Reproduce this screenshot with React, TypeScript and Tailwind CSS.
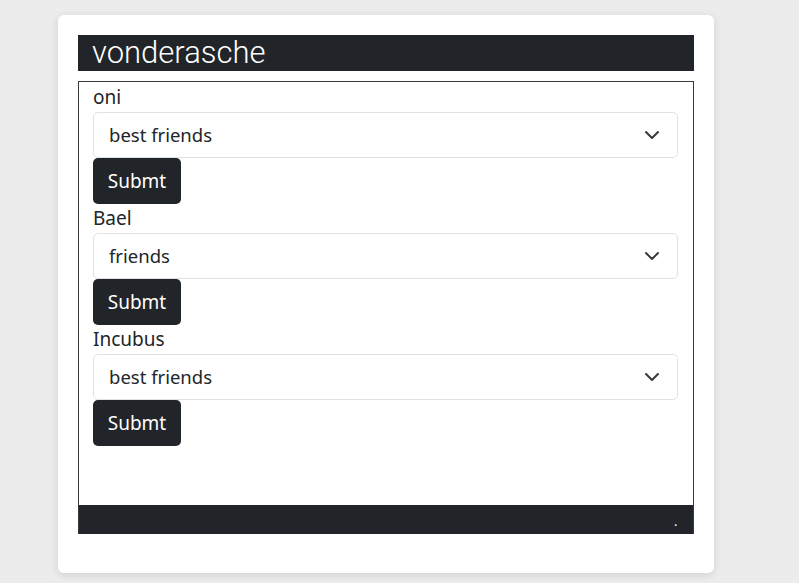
import { useState } from "react";

const PEOPLE = [
  { name: "oni", level: "best friends" },
  { name: "Bael", level: "friends" },
  { name: "Incubus", level: "best friends" },
];

const LEVELS = ["best friends", "friends", "acquaintances"];

function Chevron() {
  return (
    <svg width="16" height="16" viewBox="0 0 16 16" fill="none" className="absolute right-[18px] top-1/2 -translate-y-1/2 pointer-events-none">
      <path d="M2 5l6 6 6-6" stroke="#343a40" strokeWidth="2" strokeLinecap="round" strokeLinejoin="round" />
    </svg>
  );
}

function FriendRow({ name, level }: { name: string; level: string }) {
  const [value, setValue] = useState(level);
  return (
    <div className="flex flex-col">
      <label className="h-[29px] leading-[29px] text-[19px] text-[#212529]">{name}</label>
      <div className="relative">
        <select
          value={value}
          onChange={(e) => setValue(e.target.value)}
          className="h-[46px] w-full appearance-none rounded-[5px] border border-[#dee2e6] bg-white pl-[15px] pr-10 text-[18.5px] text-[#212529] outline-none"
        >
          {LEVELS.map((l) => (
            <option key={l} value={l}>
              {l}
            </option>
          ))}
        </select>
        <Chevron />
      </div>
      <div>
        <button
          type="button"
          className="h-[46px] w-[88px] rounded-[5px] bg-[#212529] text-[19px] text-white"
        >
          Submt
        </button>
      </div>
    </div>
  );
}

export default function App() {
  return (
    <div className="min-h-[583px] bg-[#ececec] pl-[58px] pt-[15px]" style={{ fontFamily: '"Segoe UI", "Noto Sans", sans-serif' }}>
      <div className="w-[656px] rounded-[6px] bg-white px-[20px] pb-[39px] pt-[20px] shadow-[0_2px_8px_rgba(0,0,0,0.12)]">
        <div className="flex h-[36px] items-center bg-[#212529] pl-[14px] text-[31px] font-light text-white" style={{ fontFamily: "Roboto, sans-serif" }}>
          vonderasche
        </div>
        <div className="mt-[10px] border border-[#3a3a3a] border-b-0">
          <div className="flex flex-col pb-[59px] pl-[14px] pr-[15px] pt-px">
            {PEOPLE.map((p) => (
              <FriendRow key={p.name} name={p.name} level={p.level} />
            ))}
          </div>
          <div className="flex h-[29px] items-end justify-end bg-[#212529] pb-[7px] pr-[16px] text-[10px] font-bold leading-none text-white">
            .
          </div>
        </div>
      </div>
    </div>
  );
}
